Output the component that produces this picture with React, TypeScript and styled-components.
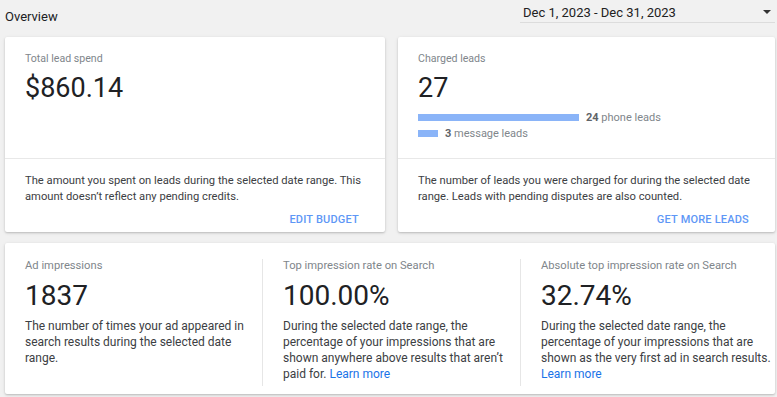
import React from "react";
import styled, { createGlobalStyle } from "styled-components";

const GlobalStyle = createGlobalStyle`
  body {
    margin: 0;
    background: #f1f1f1;
    font-family: Roboto, "Liberation Sans", Arial, sans-serif;
    color: #212121;
  }
`;

const Page = styled.div`
  width: 777px;
  height: 397px;
  overflow: hidden;
  padding: 0 2px 0 5px;
  box-sizing: border-box;
`;

const Header = styled.div`
  height: 37px;
  display: flex;
  align-items: flex-start;
  justify-content: space-between;
`;

const PageTitle = styled.h1`
  margin: 9px 0 0;
  font-size: 13px;
  font-weight: 400;
  line-height: 16px;
  color: #202124;
`;

const DatePicker = styled.div`
  width: 255px;
  height: 23px;
  box-sizing: border-box;
  display: flex;
  align-items: center;
  justify-content: space-between;
  padding: 2px 4px 0 3px;
  border-bottom: 1px solid #dcdcdc;
  font-size: 13px;
  color: #212121;
`;

const Caret = styled.span`
  width: 0;
  height: 0;
  border-left: 4px solid transparent;
  border-right: 4px solid transparent;
  border-top: 4px solid #333;
`;

const TopGrid = styled.div`
  display: grid;
  grid-template-columns: 380px 377px;
  gap: 13px;
`;

const Card = styled.div`
  background: #fff;
  border-radius: 2px;
  box-shadow: 0 1px 2px rgba(0, 0, 0, 0.18), 0 1px 4px rgba(0, 0, 0, 0.08);
`;

const CardBody = styled.div`
  height: 122px;
  box-sizing: border-box;
  padding: 15px 20px 0 20px;
  border-bottom: 1px solid #e8e8e8;
`;

const Label = styled.div<{ $size?: number }>`
  font-size: ${({ $size }) => $size ?? 10.6}px;
  line-height: 14px;
  color: #80868b;
`;

const Value = styled.div<{ $size?: number }>`
  font-size: ${({ $size }) => $size ?? 27}px;
  line-height: 38px;
  margin-top: 3px;
  color: #202124;
`;

const Bars = styled.div`
  margin-top: 4px;
  display: flex;
  flex-direction: column;
  gap: 3px;
`;

const BarRow = styled.div`
  display: flex;
  align-items: center;
  gap: 7px;
  height: 13px;
  font-size: 11px;
  color: #80868b;
`;

const Bar = styled.div`
  height: 7px;
  background: #8ab4f8;
`;

const Count = styled.b`
  color: #5f6368;
  font-weight: 700;
`;

const CardFoot = styled.div`
  height: 73px;
  box-sizing: border-box;
  padding: 14px 12px 0 20px;
  display: flex;
  flex-direction: column;
`;

const Desc = styled.p<{ $size?: number }>`
  margin: 0;
  font-size: ${({ $size }) => $size ?? 11.2}px;
  line-height: 16px;
  color: #3c4043;
`;

const Action = styled.a`
  align-self: flex-end;
  margin: 8px 14px 0 0;
  font-size: 11px;
  font-weight: 500;
  letter-spacing: 0.2px;
  color: #5e97f6;
  text-transform: uppercase;
  text-decoration: none;
`;

const StatsCard = styled(Card)`
  margin-top: 11px;
  height: 151px;
  padding-top: 16px;
  box-sizing: border-box;
  display: grid;
  grid-template-columns: 257px 258px 255px;
`;

const Stat = styled.div<{ $first?: boolean }>`
  height: 127px;
  box-sizing: border-box;
  padding: 0 4px 0 20px;
  border-left: ${({ $first }) => ($first ? "none" : "1px solid #e6e6e6")};
`;

const StatValue = styled(Value)`
  margin-top: 4px;
  margin-bottom: 3px;
`;

const Link = styled.a`
  color: #1a73e8;
  text-decoration: none;
`;

type StatItem = {
  label: string;
  value: string;
  desc: string;
  link?: boolean;
};

const stats: StatItem[] = [
  {
    label: "Ad impressions",
    value: "1837",
    desc: "The number of times your ad appeared in search results during the selected date range.",
  },
  {
    label: "Top impression rate on Search",
    value: "100.00%",
    desc: "During the selected date range, the percentage of your impressions that are shown anywhere above results that aren’t paid for.",
    link: true,
  },
  {
    label: "Absolute top impression rate on Search",
    value: "32.74%",
    desc: "During the selected date range, the percentage of your impressions that are shown as the very first ad in search results.",
    link: true,
  },
];

const App: React.FC = () => {
  return (
    <Page>
      <GlobalStyle />
      <Header>
        <PageTitle>Overview</PageTitle>
        <DatePicker>
          <span>Dec 1, 2023 - Dec 31, 2023</span>
          <Caret />
        </DatePicker>
      </Header>

      <TopGrid>
        <Card>
          <CardBody>
            <Label>Total lead spend</Label>
            <Value>$860.14</Value>
          </CardBody>
          <CardFoot>
            <Desc>
              The amount you spent on leads during the selected date range. This
              amount doesn’t reflect any pending credits.
            </Desc>
            <Action href="#">Edit budget</Action>
          </CardFoot>
        </Card>

        <Card>
          <CardBody>
            <Label>Charged leads</Label>
            <Value>27</Value>
            <Bars>
              <BarRow>
                <Bar style={{ width: 161 }} />
                <span>
                  <Count>24</Count> phone leads
                </span>
              </BarRow>
              <BarRow>
                <Bar style={{ width: 20 }} />
                <span>
                  <Count>3</Count> message leads
                </span>
              </BarRow>
            </Bars>
          </CardBody>
          <CardFoot>
            <Desc>
              The number of leads you were charged for during the selected date
              range. Leads with pending disputes are also counted.
            </Desc>
            <Action href="#">Get more leads</Action>
          </CardFoot>
        </Card>
      </TopGrid>

      <StatsCard>
        {stats.map((s, i) => (
          <Stat key={s.label} $first={i === 0}>
            <Label $size={11.2}>{s.label}</Label>
            <StatValue $size={28}>{s.value}</StatValue>
            <Desc $size={12}>
              {s.desc}
              {s.link && (
                <>
                  {" "}
                  <Link href="#">Learn more</Link>
                </>
              )}
            </Desc>
          </Stat>
        ))}
      </StatsCard>
    </Page>
  );
};

export default App;
